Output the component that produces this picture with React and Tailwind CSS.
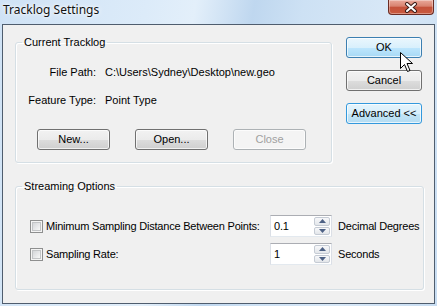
import React from "react";

const dlgFont = { fontFamily: '"Liberation Sans", Arial, sans-serif' };

// Botón clásico de Windows 7
const WinButton = ({ children, variant = "normal", className = "" }) => {
  const styles = {
    normal:
      "border-[#707070] bg-[linear-gradient(#f2f2f2_0%,#ebebeb_50%,#dddddd_51%,#cfcfcf_100%)] text-black",
    hover:
      "border-[#3c7fb1] bg-[linear-gradient(#eaf6fd_0%,#d9f0fc_50%,#bee6fd_51%,#a7d9f5_100%)] text-black",
    focus:
      "border-[#3399dd] bg-[linear-gradient(#e5f4fc_0%,#d6eefb_50%,#c4e5f6_51%,#b4dcf2_100%)] text-black",
    disabled: "border-[#adb2b5] bg-[#f4f4f4] text-[#a0a0a0]",
  };
  return (
    <div
      className={`h-[21px] rounded-[3px] border flex items-center justify-center text-[11px] leading-none shadow-[inset_0_0_0_1px_rgba(255,255,255,0.7)] ${styles[variant]} ${className}`}
    >
      {children}
    </div>
  );
};

const Checkbox = () => (
  <div className="w-[13px] h-[13px] border border-[#8e8f8f] bg-[#f4f4f4] p-[1px] shrink-0">
    <div className="w-full h-full border border-[#c2c4c6] bg-[linear-gradient(135deg,#d4d6d9,#f7f7f7)]" />
  </div>
);

const SpinBox = ({ value }) => (
  <div className="w-[62px] h-[22px] flex bg-white border border-[#dbdfe6] border-t-[#abadb3] border-b-[#e3e9ef]">
    <div className="flex-1 flex items-center pl-[3px] text-[11px]">{value}</div>
    <div className="w-[17px] flex flex-col gap-[1px] py-[1px] pr-[1px]">
      <div className="flex-1 rounded-[2px] border border-[#c5cbd4] bg-[linear-gradient(#f7f8fa,#e3e6ea)] flex items-center justify-center">
        <svg width="7" height="4" viewBox="0 0 7 4">
          <path d="M0 4 L3.5 0 L7 4 Z" fill="#4d6185" />
        </svg>
      </div>
      <div className="flex-1 rounded-[2px] border border-[#c5cbd4] bg-[linear-gradient(#f7f8fa,#e3e6ea)] flex items-center justify-center">
        <svg width="7" height="4" viewBox="0 0 7 4">
          <path d="M0 0 L3.5 4 L7 0 Z" fill="#4d6185" />
        </svg>
      </div>
    </div>
  </div>
);

export default function App() {
  return (
    <div className="relative w-[437px] h-[306px] overflow-hidden bg-[linear-gradient(100deg,#cfe2f5_0%,#dcebf9_30%,#e3effa_40%,#bfd7ef_52%,#cde1f4_62%,#d8e8f7_80%,#c8ddf2_100%)]">
      {/* Barra de título */}
      <div className="h-[24px] flex items-start justify-between">
        <span
          className="pl-[3px] pt-[2px] text-[12px] leading-[16px] text-[#111] [text-shadow:0_0_6px_#fff,0_0_3px_#fff]"
          style={{ fontFamily: '"Noto Sans", "Open Sans", sans-serif' }}
        >
          Tracklog Settings
        </span>
        <div className="mr-[3px] w-[46px] h-[15px] rounded-b-[4px] border border-t-0 border-[#6b2c24] bg-[linear-gradient(#e9a99b_0%,#d8826f_45%,#c4513b_50%,#c95b3f_100%)] shadow-[inset_0_0_0_1px_rgba(255,255,255,0.35)] flex items-center justify-center">
          <svg width="14" height="11" viewBox="0 0 14 11">
            <path d="M3 2 L11 9 M11 2 L3 9" stroke="#3b1c17" strokeWidth="4" strokeLinecap="round" />
            <path d="M3 2 L11 9 M11 2 L3 9" stroke="#ffffff" strokeWidth="2" strokeLinecap="round" />
          </svg>
        </div>
      </div>

      {/* Área cliente */}
      <div
        className="mx-[2px] h-[280px] border border-[#4f5d6e] bg-[#f0f0f0] pl-[12px] text-[11px] text-black"
        style={dlgFont}
      >
        <div className="flex">
          {/* Current Tracklog */}
          <fieldset className="mt-[11px] w-[317px] h-[127px] border border-[#d5dfe5] rounded-[3px] shadow-[inset_1px_1px_0_#fff,1px_1px_0_#fff]">
            <legend className="ml-[6px] px-[2px] leading-[13px]">Current Tracklog</legend>
            <div className="mt-[17px] grid grid-cols-[80px_1fr] gap-x-[9px] gap-y-[15px] leading-[13px]">
              <span className="text-right">File Path:</span>
              <span>C:\Users\Sydney\Desktop\new.geo</span>
              <span className="text-right">Feature Type:</span>
              <span>Point Type</span>
            </div>
            <div className="mt-[22px] pl-[21px] flex gap-[25px]">
              <WinButton className="w-[73px]">New...</WinButton>
              <WinButton className="w-[73px]">Open...</WinButton>
              <WinButton variant="disabled" className="w-[73px]">
                Close
              </WinButton>
            </div>
          </fieldset>

          {/* Botones de la derecha */}
          <div className="ml-[14px] mt-[12px] flex flex-col gap-[12px]">
            <WinButton variant="hover" className="w-[76px]">OK</WinButton>
            <WinButton className="w-[76px]">Cancel</WinButton>
            <WinButton variant="focus" className="w-[76px] border-[#2f8fd8]">
              Advanced &lt;&lt;
            </WinButton>
          </div>
        </div>

        {/* Streaming Options */}
        <fieldset className="mt-[17px] w-[409px] h-[110px] border border-[#d5dfe5] rounded-[3px] shadow-[inset_1px_1px_0_#fff,1px_1px_0_#fff] tracking-[-0.2px]">
          <legend className="ml-[6px] px-[2px] leading-[13px] tracking-normal">Streaming Options</legend>
          <div className="mt-[22px] pl-[14px] flex flex-col gap-[6px]">
            <div className="flex items-center">
              <div className="w-[240px] flex items-center gap-[3px]">
                <Checkbox />
                <span>Minimum Sampling Distance Between Points:</span>
              </div>
              <SpinBox value="0.1" />
              <span className="ml-[6px]">Decimal Degrees</span>
            </div>
            <div className="flex items-center">
              <div className="w-[240px] flex items-center gap-[3px]">
                <Checkbox />
                <span>Sampling Rate:</span>
              </div>
              <SpinBox value="1" />
              <span className="ml-[6px]">Seconds</span>
            </div>
          </div>
        </fieldset>
      </div>

      {/* Cursor del ratón */}
      <svg
        className="absolute left-[400px] top-[52px]"
        width="14"
        height="21"
        viewBox="0 0 14 21"
      >
        <path
          d="M0.5 0.5 L0.5 16.5 L4.5 12.5 L7.5 19.5 L10 18.5 L7 11.5 L12.5 11.5 Z"
          fill="#fff"
          stroke="#000"
          strokeWidth="1"
          strokeLinejoin="round"
        />
      </svg>
    </div>
  );
}
